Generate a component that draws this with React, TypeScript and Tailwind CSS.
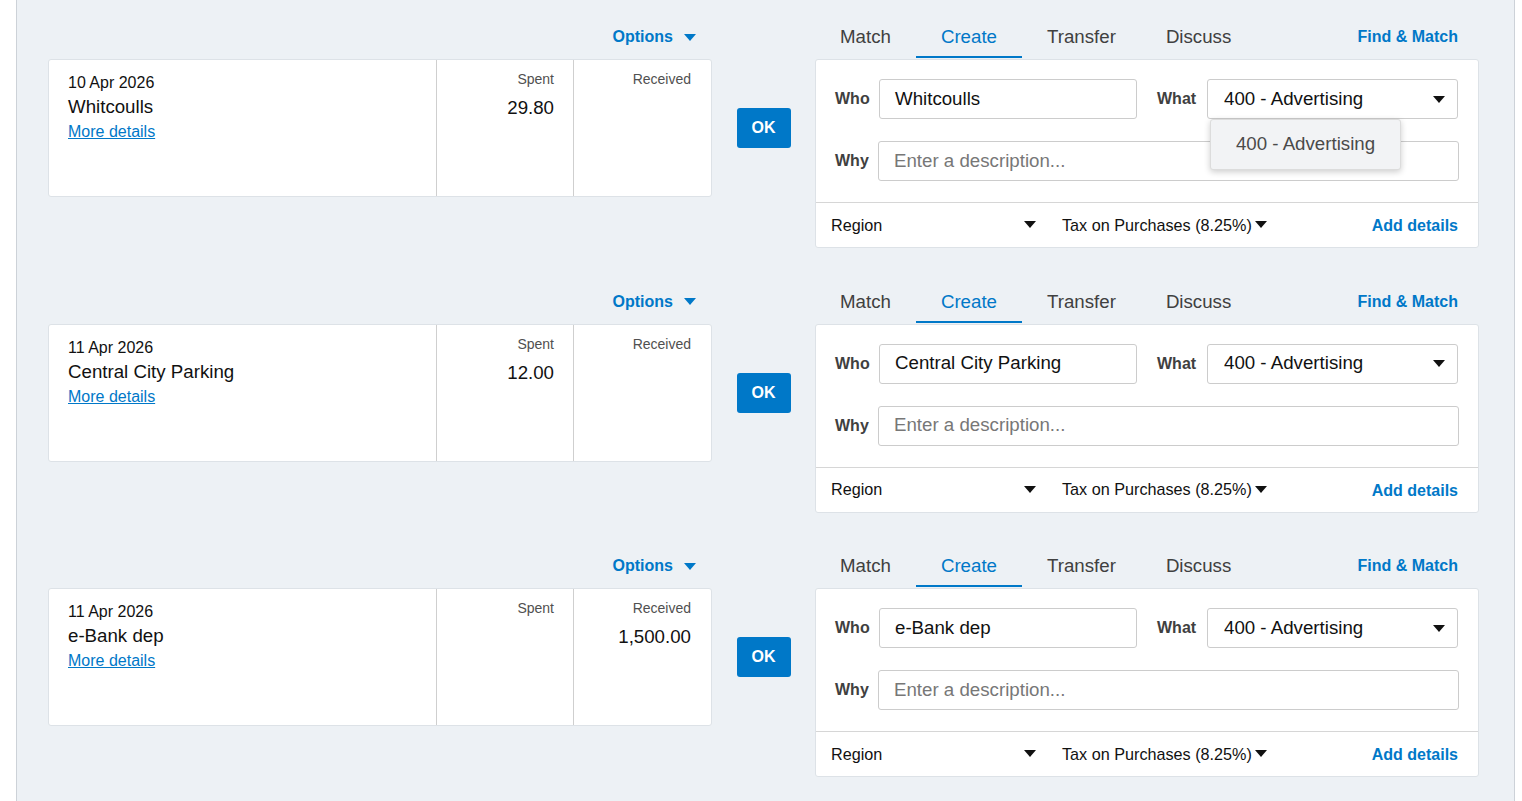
import React from 'react';

type Line = {
  date: string;
  payee: string;
  spent?: string;
  received?: string;
  showMenu?: boolean;
};

const lines: Line[] = [
  { date: '10 Apr 2026', payee: 'Whitcoulls', spent: '29.80', showMenu: true },
  { date: '11 Apr 2026', payee: 'Central City Parking', spent: '12.00' },
  { date: '11 Apr 2026', payee: 'e-Bank dep', received: '1,500.00' },
];

const tabs = ['Match', 'Create', 'Transfer', 'Discuss'];

function Caret({ className = '' }: { className?: string }) {
  return (
    <svg viewBox="0 0 12 7" className={`w-[12px] h-[7px] ${className}`} fill="currentColor">
      <path d="M0 0h12L6 7z" />
    </svg>
  );
}

function StatementCard({ line }: { line: Line }) {
  return (
    <div className="flex h-[138px] bg-white border border-[#dde2e7] rounded-[3px]">
      <div className="w-[388px] pl-[19px] pt-[13px] border-r border-[#cfcfcf]">
        <div className="text-[16px] leading-5 text-[#111]">{line.date}</div>
        <div className="mt-[2px] text-[18.7px] leading-6 text-[#111]">{line.payee}</div>
        <a href="#" className="mt-px block text-[16px] leading-6 text-[#0078c8] underline">
          More details
        </a>
      </div>
      <div className="w-[137px] pr-[19px] pt-[9px] text-right border-r border-[#cfcfcf]">
        <div className="text-[14px] leading-5 text-[#505050]">Spent</div>
        {line.spent && <div className="mt-[7px] text-[18.7px] leading-6 text-[#111]">{line.spent}</div>}
      </div>
      <div className="flex-1 pr-[20px] pt-[9px] text-right">
        <div className="text-[14px] leading-5 text-[#505050]">Received</div>
        {line.received && <div className="mt-[7px] text-[18.7px] leading-6 text-[#111]">{line.received}</div>}
      </div>
    </div>
  );
}

function CreatePanel({ line }: { line: Line }) {
  return (
    <div className="bg-white border border-[#dde2e7] rounded-[3px]">
      <div className="px-[19px] pt-[19px] pb-[21px] border-b border-[#d6d6d6]">
        <div className="flex items-center h-[40px]">
          <span className="w-[44px] text-[16px] font-bold text-[#404040]">Who</span>
          <div className="w-[258px] h-[40px] flex items-center px-[15px] border border-[#cccccc] rounded-[3px] text-[18.7px] text-[#111]">
            {line.payee}
          </div>
          <span className="ml-[20px] w-[50px] text-[16px] font-bold text-[#404040]">What</span>
          <div className="relative">
            <div className="w-[251px] h-[40px] flex items-center justify-between pl-[16px] pr-[12px] border border-[#cccccc] rounded-[3px] text-[18.7px] text-[#111]">
              <span>400 - Advertising</span>
              <Caret className="text-[#111]" />
            </div>
            {line.showMenu && (
              <div className="absolute left-[3px] top-[40px] z-10 w-[191px] h-[51px] flex items-center justify-center bg-[#f2f3f5] border border-[#dcdcdc] rounded-[3px] shadow-[0_2px_6px_rgba(0,0,0,0.2)] text-[18.7px] text-[#4a4a4a]">
                400 - Advertising
              </div>
            )}
          </div>
        </div>
        <div className="mt-[22px] flex items-center h-[40px]">
          <span className="w-[43px] text-[16px] font-bold text-[#404040]">Why</span>
          <div className="flex-1 h-[40px] flex items-center px-[15px] border border-[#cccccc] rounded-[3px] text-[18.7px] text-[#777]">
            Enter a description...
          </div>
        </div>
      </div>
      <div className="flex items-center h-[44px] pl-[15px] pr-[20px] text-[16.2px] text-[#111]">
        <div className="w-[205px] flex items-center justify-between">
          <span>Region</span>
          <Caret />
        </div>
        <div className="ml-[26px] flex items-center gap-[3px]">
          <span>Tax on Purchases (8.25%)</span>
          <Caret />
        </div>
        <a href="#" className="ml-auto pt-[2px] text-[16px] font-bold text-[#0078c8]">
          Add details
        </a>
      </div>
    </div>
  );
}

function ReconcileRow({ line }: { line: Line }) {
  return (
    <div className="flex">
      <div className="w-[664px]">
        <div className="h-[40px] flex items-start justify-end pr-[16px] pt-[7px]">
          <button className="flex items-center gap-[11px] text-[16px] leading-6 font-bold text-[#0078c8]">
            Options
            <Caret />
          </button>
        </div>
        <div className="mt-px">
          <StatementCard line={line} />
        </div>
      </div>
      <div className="w-[103px] pt-[41px]">
        <div className="h-[138px] flex items-center justify-center">
          <button className="w-[54px] h-[40px] bg-[#0078c8] rounded-[3px] text-white text-[16px] font-bold">
            OK
          </button>
        </div>
      </div>
      <div className="w-[664px]">
        <div className="h-[40px] flex items-end">
          {tabs.map((t) => (
            <div
              key={t}
              className={`h-full pt-[7px] pb-[7px] px-[25px] text-[18.7px] leading-6 border-b-2 ${
                t === 'Create' ? 'text-[#0078c8] border-[#0078c8]' : 'text-[#404040] border-transparent'
              }`}
            >
              {t}
            </div>
          ))}
          <a href="#" className="ml-auto self-start pt-[7px] pr-[21px] text-[16px] leading-6 font-bold text-[#0078c8]">
            Find &amp; Match
          </a>
        </div>
        <div className="mt-px">
          <CreatePanel line={line} />
        </div>
      </div>
    </div>
  );
}

export default function App() {
  return (
    <div className="min-h-screen bg-white" style={{ fontFamily: '"Liberation Sans", Arial, sans-serif' }}>
      <div className="ml-[16px] w-[1499px] min-h-[801px] bg-[#edf1f5] border-x border-[#cdd2d8] pl-[31px] pt-[18px] flex flex-col gap-[34.5px]">
        {lines.map((l, i) => (
          <ReconcileRow key={i} line={l} />
        ))}
      </div>
    </div>
  );
}
